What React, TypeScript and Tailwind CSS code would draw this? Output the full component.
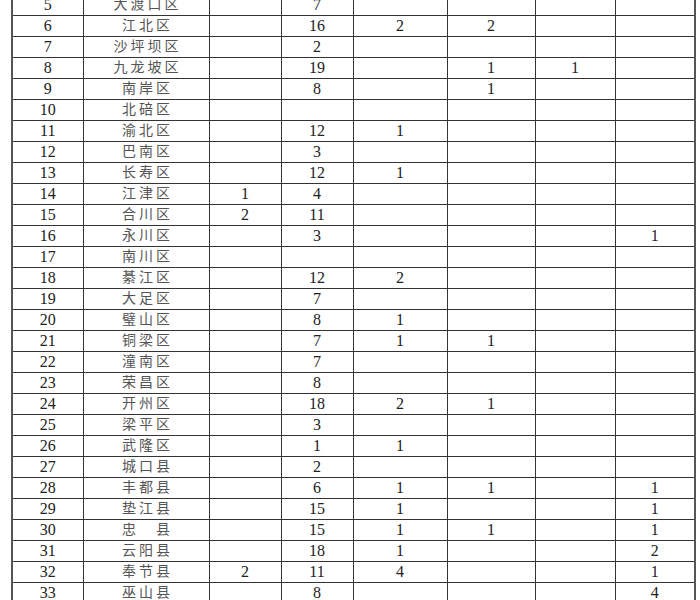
const rows: [string, string, string[]][] = [
  ["5", "大渡口区", ["", "7", "", "", "", ""]],
  ["6", "江北区", ["", "16", "2", "2", "", ""]],
  ["7", "沙坪坝区", ["", "2", "", "", "", ""]],
  ["8", "九龙坡区", ["", "19", "", "1", "1", ""]],
  ["9", "南岸区", ["", "8", "", "1", "", ""]],
  ["10", "北碚区", ["", "", "", "", "", ""]],
  ["11", "渝北区", ["", "12", "1", "", "", ""]],
  ["12", "巴南区", ["", "3", "", "", "", ""]],
  ["13", "长寿区", ["", "12", "1", "", "", ""]],
  ["14", "江津区", ["1", "4", "", "", "", ""]],
  ["15", "合川区", ["2", "11", "", "", "", ""]],
  ["16", "永川区", ["", "3", "", "", "", "1"]],
  ["17", "南川区", ["", "", "", "", "", ""]],
  ["18", "綦江区", ["", "12", "2", "", "", ""]],
  ["19", "大足区", ["", "7", "", "", "", ""]],
  ["20", "璧山区", ["", "8", "1", "", "", ""]],
  ["21", "铜梁区", ["", "7", "1", "1", "", ""]],
  ["22", "潼南区", ["", "7", "", "", "", ""]],
  ["23", "荣昌区", ["", "8", "", "", "", ""]],
  ["24", "开州区", ["", "18", "2", "1", "", ""]],
  ["25", "梁平区", ["", "3", "", "", "", ""]],
  ["26", "武隆区", ["", "1", "1", "", "", ""]],
  ["27", "城口县", ["", "2", "", "", "", ""]],
  ["28", "丰都县", ["", "6", "1", "1", "", "1"]],
  ["29", "垫江县", ["", "15", "1", "", "", "1"]],
  ["30", "忠\u3000县", ["", "15", "1", "1", "", "1"]],
  ["31", "云阳县", ["", "18", "1", "", "", "2"]],
  ["32", "奉节县", ["2", "11", "4", "", "", "1"]],
  ["33", "巫山县", ["", "8", "", "", "", "4"]],
];

const widths = ["w-[71px]", "w-[126px]", "w-[72px]", "w-[72px]", "w-[94px]", "w-[88px]", "w-[80px]", "w-[80px]"];

export default function App() {
  return (
    <div className="w-[700px] h-[600px] overflow-hidden bg-white pl-[11px]">
      <table
        className="mt-[-6px] w-[683px] table-fixed border-collapse border-x-2 border-[#555] text-[#222]"
        style={{ fontFamily: '"Liberation Serif", "Noto Sans CJK SC", serif' }}
      >
        <colgroup>
          {widths.map((w, i) => (
            <col key={i} className={w} />
          ))}
        </colgroup>
        <tbody>
          {rows.map(([no, name, vals]) => (
            <tr key={no} className="h-[21px]">
              <td className="border border-[#333] p-0 text-center text-[16px] leading-[20px]">{no}</td>
              <td className="border border-[#333] p-0 pl-[3px] text-center text-[14px] leading-[20px] tracking-[3px] text-[#555]">
                {name}
              </td>
              {vals.map((v, i) => (
                <td key={i} className="border border-[#333] p-0 text-center text-[16px] leading-[20px]">
                  {v}
                </td>
              ))}
            </tr>
          ))}
        </tbody>
      </table>
    </div>
  );
}
